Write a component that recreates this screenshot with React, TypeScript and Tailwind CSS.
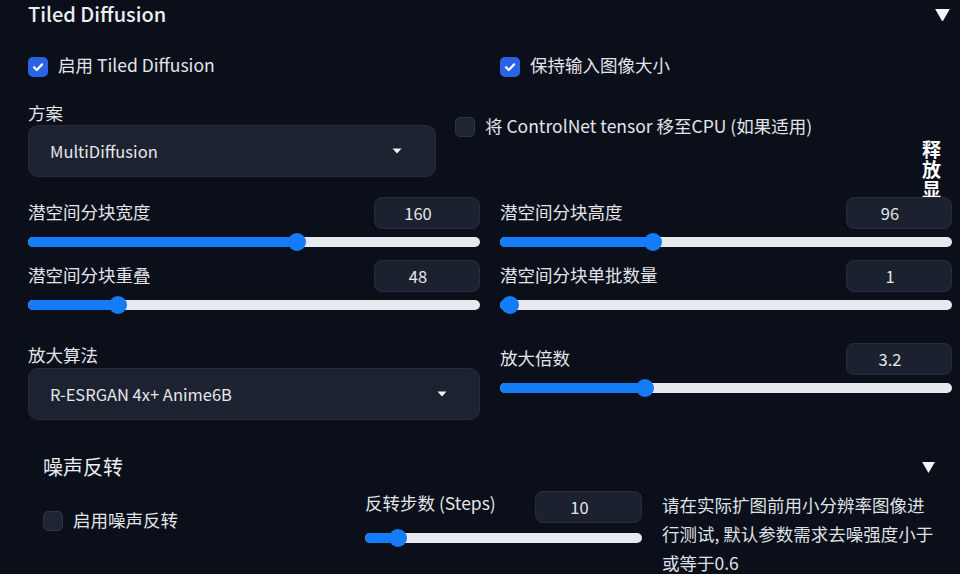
import { memo } from "react";

type SliderProps = { pct: number };

const Slider = memo(({ pct }: SliderProps) => (
  <div className="relative h-[10px] w-full rounded-full bg-[#e8e9ee]">
    <div className="h-full rounded-full bg-[#137cf6]" style={{ width: `${pct * 100}%` }} />
    <div
      className="absolute top-[-4px] h-[18px] w-[18px] rounded-full bg-[#137cf6]"
      style={{ left: `calc(${pct * 100}% - 9px)` }}
    />
  </div>
));

const Checkbox = ({ checked }: { checked?: boolean }) =>
  checked ? (
    <div className="flex h-[20px] w-[20px] shrink-0 items-center justify-center rounded-[5px] bg-[#2b63e6]">
      <svg width="14" height="14" viewBox="0 0 14 14">
        <path d="M3 7.2 L5.8 10 L11 4.4" fill="none" stroke="white" strokeWidth="2.2" strokeLinecap="round" strokeLinejoin="round" />
      </svg>
    </div>
  ) : (
    <div className="h-[20px] w-[20px] shrink-0 rounded-[5px] border border-[#2f3646] bg-[#1f2433]" />
  );

// number input; text sits a bit left of centre like the spinner-less gradio field
const NumberBox = ({ value, w = "w-[106px]" }: { value: string; w?: string }) => (
  <div
    className={`flex h-[32px] ${w} items-center justify-center rounded-[8px] border border-[#272d3b] bg-[#1c2130] pr-[18px] text-[16.5px] text-[#e6e7ea]`}
  >
    {value}
  </div>
);

const Caret = () => (
  <svg width="10" height="6" viewBox="0 0 10 6">
    <path d="M0.5 0.5 H9.5 L5 5.5 Z" fill="#f3f4f6" />
  </svg>
);

const Triangle = ({ size = 15 }: { size?: number }) => (
  <svg width={size} height={size * 0.85} viewBox="0 0 15 13">
    <path d="M0 0 H15 L7.5 13 Z" fill="#f4f5f7" />
  </svg>
);

const SliderBlock = ({ label, value, pct }: { label: string; value: string; pct: number }) => (
  <div className="flex flex-col">
    <div className="flex h-[32px] items-center justify-between">
      <span className="-mt-[3px]">{label}</span>
      <NumberBox value={value} />
    </div>
    <div className="mt-[8px]">
      <Slider pct={pct} />
    </div>
  </div>
);

const Dropdown = ({ text, caretPr }: { text: string; caretPr: string }) => (
  <div
    className={`flex h-[52px] w-full items-center justify-between rounded-[10px] border border-[#262c3a] bg-[#1d2231] pl-[21px] ${caretPr} text-[16.5px] text-[#e6e7ea]`}
  >
    <span>{text}</span>
    <Caret />
  </div>
);

const App = () => {
  return (
    <div className="h-[574px] w-[960px] overflow-hidden bg-[#0b0f19] font-['Noto_Sans_CJK_SC','Noto_Sans',sans-serif] text-[17.5px] leading-[24px] text-[#e3e5ea]">
      {/* header */}
      <div className="flex h-[30px] items-center justify-between pl-[28px] pr-[10px]">
        <span className="-mt-[2px] text-[20px] font-medium text-[#eceef2]">Tiled Diffusion</span>
        <Triangle />
      </div>

      {/* checkboxes */}
      <div className="mt-[27px] grid h-[20px] grid-cols-2 gap-x-[20px] pl-[28px] pr-[8px]">
        <div className="flex items-center">
          <Checkbox checked />
          <span className="-mt-[4px] ml-[10px]">启用 Tiled Diffusion</span>
        </div>
        <div className="flex items-center">
          <Checkbox checked />
          <span className="-mt-[4px] ml-[10px]">保持输入图像大小</span>
        </div>
      </div>

      {/* method row */}
      <div className="mt-[25px] flex h-[75px] items-start pl-[28px] pr-[18px]">
        <div className="flex w-[408px] flex-col">
          <span className="h-[22px] leading-[22px]">方案</span>
          <div className="mt-[1px]">
            <Dropdown text="MultiDiffusion" caretPr="pr-[33px]" />
          </div>
        </div>
        <div className="ml-[19px] mt-[15px] flex h-[20px] items-center">
          <Checkbox />
          <span className="-mt-[2px] ml-[10px]">将 ControlNet tensor 移至CPU (如果适用)</span>
        </div>
        <div className="ml-auto mt-[37px] h-[59px] w-[20px] shrink-0 overflow-hidden text-[19px] font-bold leading-[20px] text-white">
          释放显存
        </div>
      </div>

      {/* latent tiles */}
      <div className="mt-[20px] grid grid-cols-2 gap-x-[20px] pl-[28px] pr-[8px]">
        <SliderBlock label="潜空间分块宽度" value="160" pct={0.595} />
        <SliderBlock label="潜空间分块高度" value="96" pct={0.338} />
      </div>
      <div className="mt-[13px] grid grid-cols-2 gap-x-[20px] pl-[28px] pr-[8px]">
        <SliderBlock label="潜空间分块重叠" value="48" pct={0.199} />
        <SliderBlock label="潜空间分块单批数量" value="1" pct={0.022} />
      </div>

      {/* upscaler */}
      <div className="mt-[31px] grid grid-cols-2 gap-x-[20px] pl-[28px] pr-[8px]">
        <div className="flex flex-col pt-[3px]">
          <span className="h-[22px] leading-[22px]">放大算法</span>
          <div className="mt-[2px]">
            <Dropdown text="R-ESRGAN 4x+ Anime6B" caretPr="pr-[32px]" />
          </div>
        </div>
        <div className="pt-[2px]">
          <SliderBlock label="放大倍数" value="3.2" pct={0.321} />
        </div>
      </div>

      {/* noise inversion */}
      <div className="mt-[33px] flex h-[30px] items-center justify-between pl-[43px] pr-[25px]">
        <span className="-mt-[2px] text-[20px] text-[#eceef2]">噪声反转</span>
        <Triangle size={13} />
      </div>
      <div className="mt-[7px] flex items-start pl-[43px]">
        <div className="flex w-[322px] items-center pt-[20px]">
          <Checkbox />
          <span className="-mt-[2px] ml-[10px]">启用噪声反转</span>
        </div>
        <div className="flex w-[277px] flex-col pt-[2px]">
          <div className="flex h-[30px] items-center justify-between">
            <span className="-mt-[8px]">反转步数 (Steps)</span>
            <NumberBox value="10" w="w-[107px]" />
          </div>
          <div className="mt-[11px]">
            <Slider pct={0.119} />
          </div>
        </div>
        <div className="ml-[20px] whitespace-nowrap leading-[29px] text-[17.5px] text-[#dfe1e6]">
          请在实际扩图前用小分辨率图像进
          <br />
          行测试, 默认参数需求去噪强度小于
          <br />
          或等于0.6
        </div>
      </div>
    </div>
  );
};

export default App;
